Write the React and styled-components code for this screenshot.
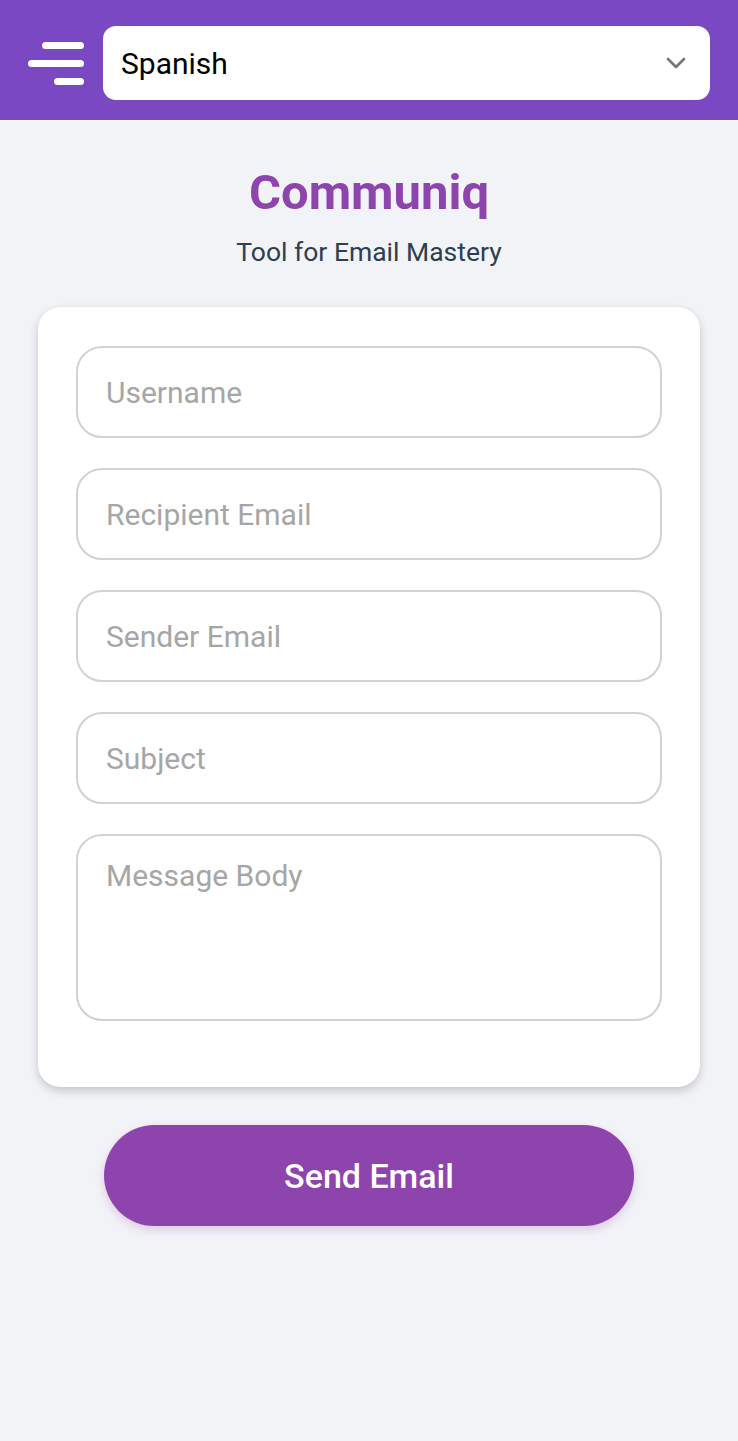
import React from "react";
import styled, { createGlobalStyle } from "styled-components";

const GlobalStyle = createGlobalStyle`
  * { box-sizing: border-box; }
  body {
    margin: 0;
    background: #f2f3f7;
    font-family: Roboto, "Noto Sans", Arial, sans-serif;
  }
`;

const Page = styled.div`
  min-height: 1441px;
  background: #f2f3f7;
`;

const Header = styled.header`
  height: 120px;
  background: #7a48c2;
  display: flex;
  align-items: center;
  padding: 6px 28px 0;
  gap: 19px;
`;

const MenuButton = styled.button`
  width: 56px;
  height: 48px;
  border: none;
  background: transparent;
  padding: 0;
  display: flex;
  flex-direction: column;
  align-items: flex-end;
  justify-content: center;
  gap: 11px;
`;

const MenuLine = styled.span`
  display: block;
  height: 7px;
  width: ${({ $w }) => $w}px;
  border-radius: 4px;
  background: #ffffff;
`;

const SelectBox = styled.div`
  flex: 1;
  height: 74px;
  background: #ffffff;
  border-radius: 13px;
  display: flex;
  align-items: center;
  justify-content: space-between;
  padding: 0 24px 0 18px;
  font-size: 30px;
  color: #000;
`;

const Hero = styled.div`
  display: flex;
  flex-direction: column;
  align-items: center;
  padding-top: 44px;
`;

const Title = styled.h1`
  margin: 0;
  font-size: 49px;
  font-weight: 700;
  line-height: 58px;
  color: #8e44ad;
`;

const SubTitle = styled.p`
  margin: 15px 0 0;
  font-size: 26.5px;
  line-height: 30px;
  color: #2c3e50;
`;

const Card = styled.form`
  margin: 40px 38px 0;
  background: #ffffff;
  border-radius: 22px;
  padding: 39px 38px 36px;
  box-shadow: 0 4px 10px rgba(0, 0, 0, 0.18), 0 0 2px rgba(0, 0, 0, 0.06);
  display: flex;
  flex-direction: column;
  gap: 30px;
`;

const Field = styled.input`
  height: 92px;
  width: 100%;
  border: 2px solid #d2d2d2;
  border-radius: 26px;
  padding: 0 28px;
  font-family: inherit;
  font-size: 30px;
  color: #333;
  background: #fff;
  outline: none;
  &::placeholder {
    color: #a6a6a6;
  }
`;

const Area = styled.textarea`
  height: 187px;
  width: 100%;
  border: 2px solid #d2d2d2;
  border-radius: 26px;
  padding: 22px 28px;
  font-family: inherit;
  font-size: 30px;
  color: #333;
  resize: none;
  outline: none;
  margin-bottom: 30px;
  &::placeholder {
    color: #a6a6a6;
  }
`;

const SendButton = styled.button`
  display: block;
  margin: 38px auto 0;
  width: 530px;
  height: 101px;
  border: none;
  border-radius: 51px;
  background: #8e44ad;
  color: #ffffff;
  font-family: inherit;
  font-size: 34px;
  font-weight: 500;
  box-shadow: 0 4px 10px rgba(142, 68, 173, 0.22);
`;

function Chevron() {
  return (
    <svg width="20" height="12" viewBox="0 0 20 12" fill="none">
      <path d="M2 2l8 8 8-8" stroke="#757575" strokeWidth="2.6" strokeLinecap="round" strokeLinejoin="round" />
    </svg>
  );
}

export default function App() {
  return (
    <Page>
      <GlobalStyle />
      <Header>
        <MenuButton aria-label="menu">
          <MenuLine $w={42} />
          <MenuLine $w={56} />
          <MenuLine $w={30} />
        </MenuButton>
        <SelectBox>
          <span>Spanish</span>
          <Chevron />
        </SelectBox>
      </Header>
      <Hero>
        <Title>Communiq</Title>
        <SubTitle>Tool for Email Mastery</SubTitle>
      </Hero>
      <Card onSubmit={(e) => e.preventDefault()}>
        <Field placeholder="Username" />
        <Field placeholder="Recipient Email" />
        <Field placeholder="Sender Email" />
        <Field placeholder="Subject" />
        <Area placeholder="Message Body" />
      </Card>
      <SendButton>Send Email</SendButton>
    </Page>
  );
}
